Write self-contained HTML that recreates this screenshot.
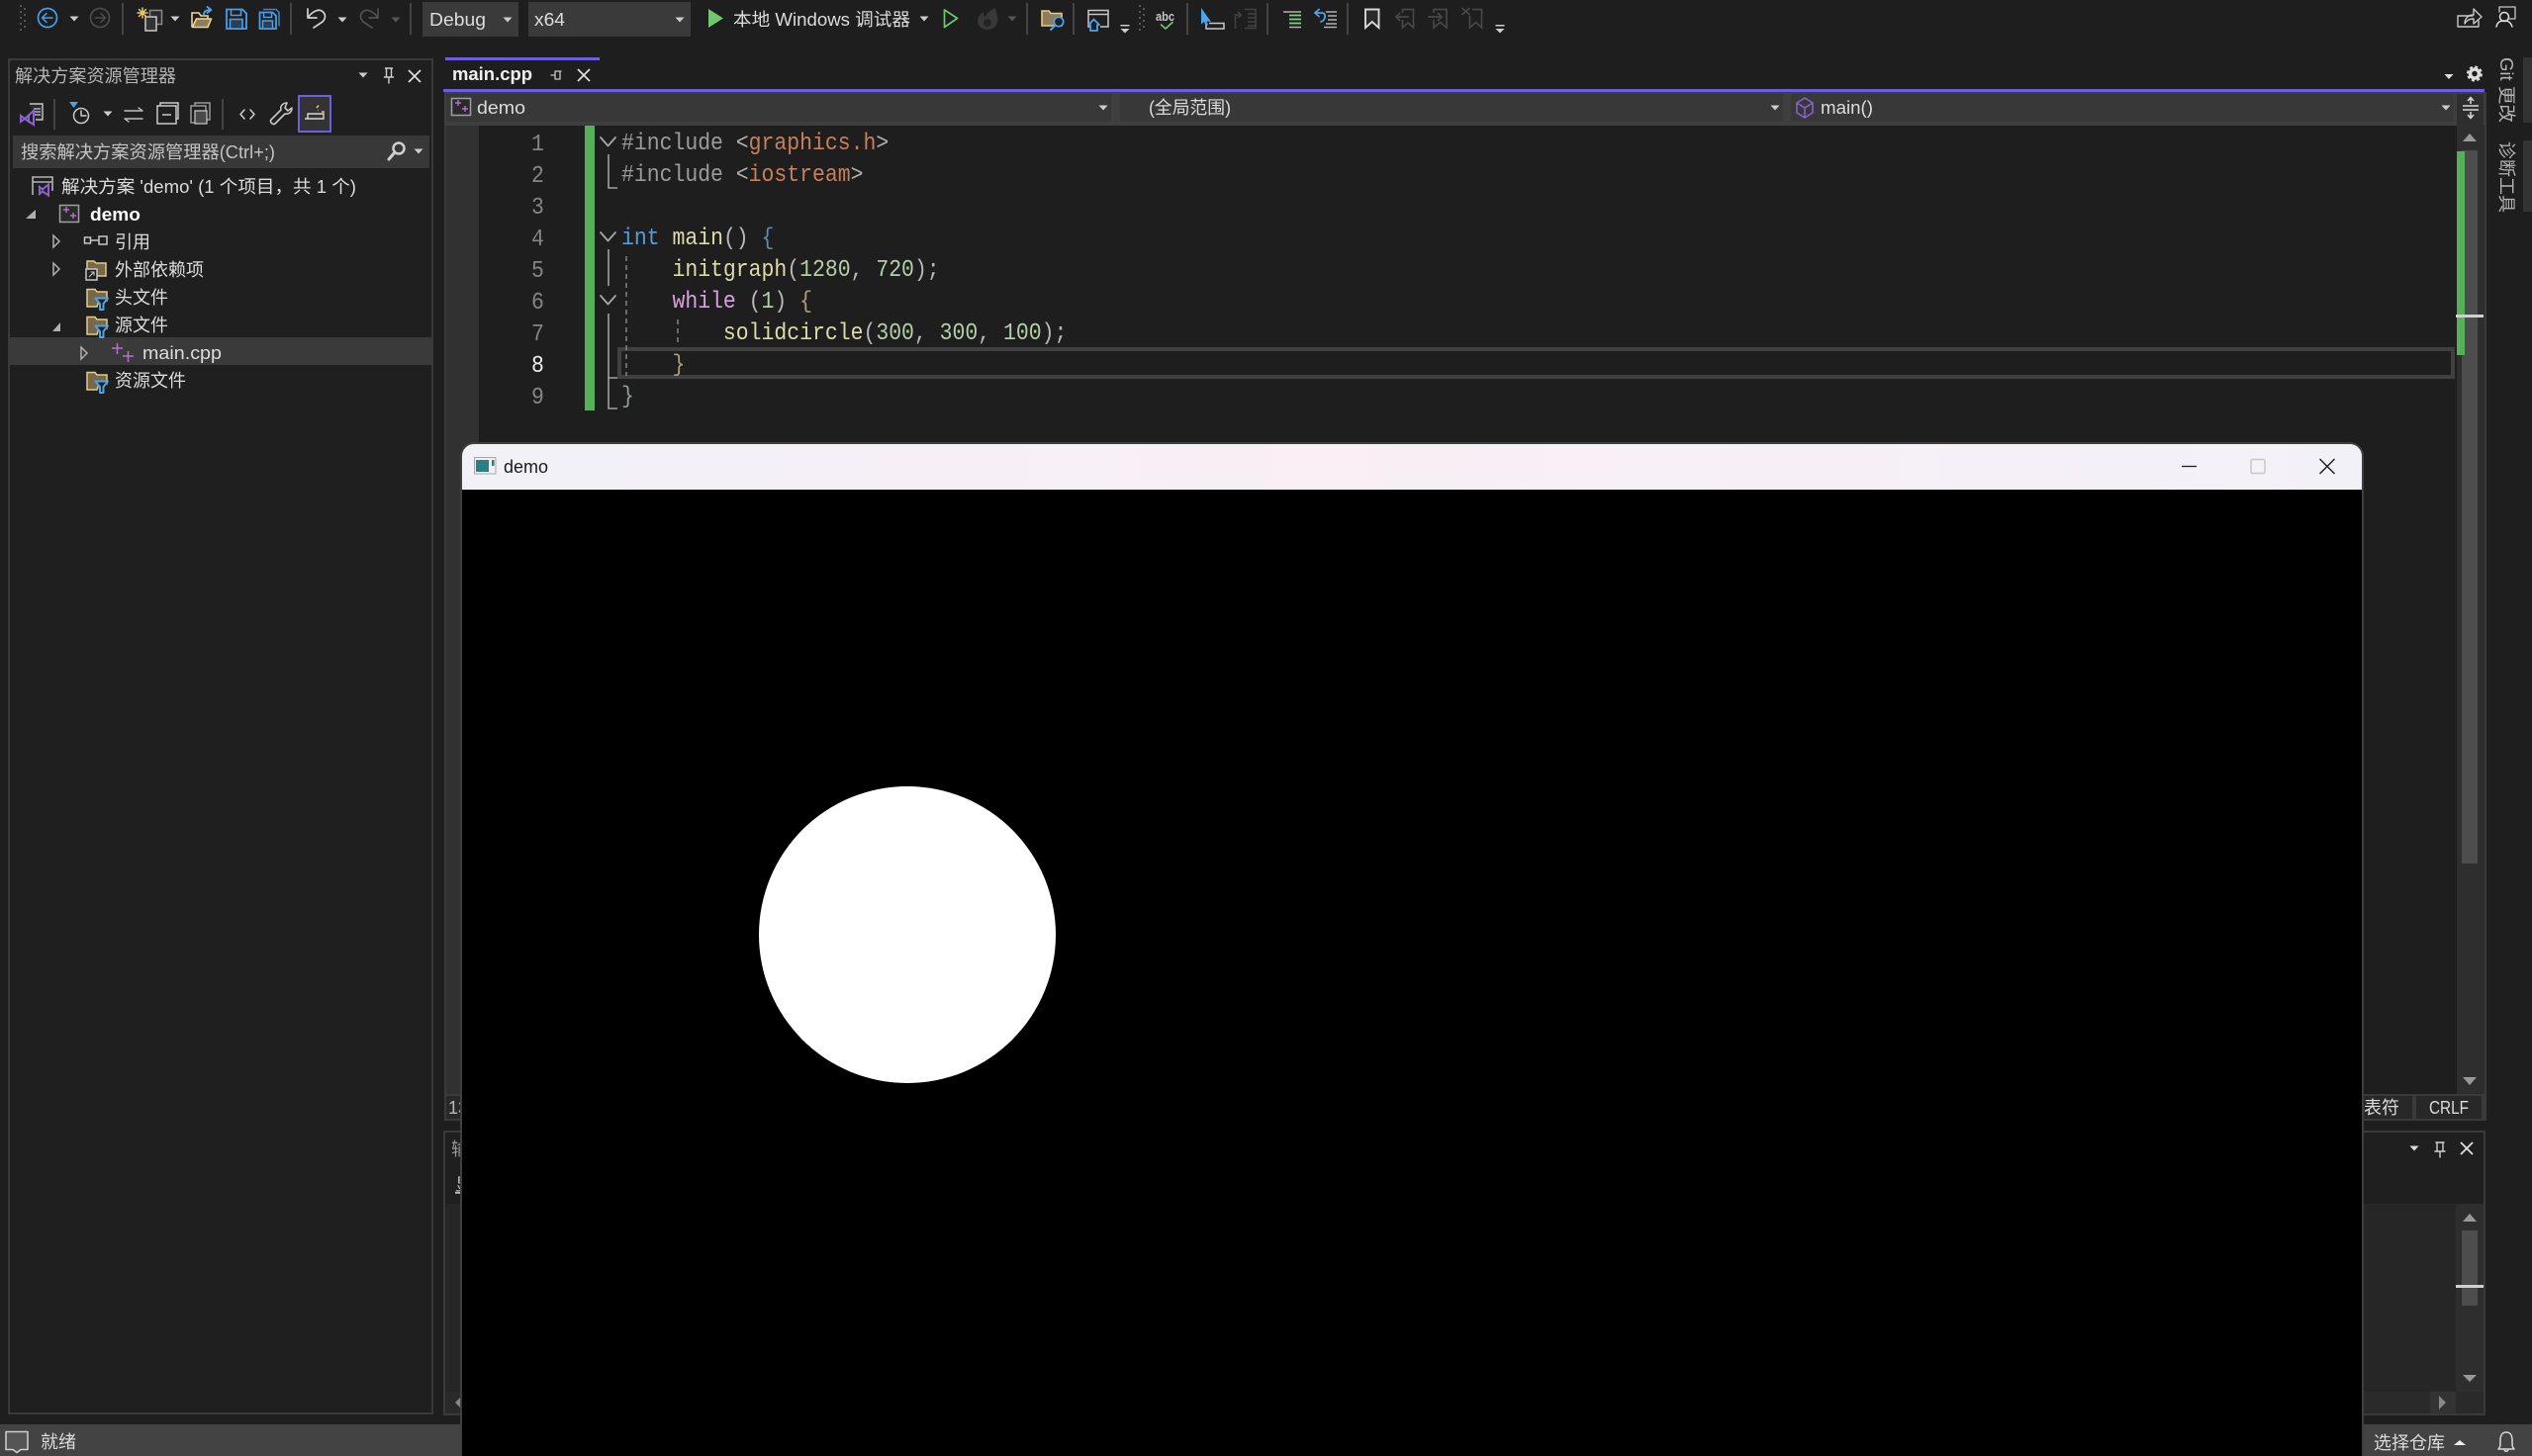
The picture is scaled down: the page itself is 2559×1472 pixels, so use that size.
<!DOCTYPE html>
<html lang="zh-CN">
<head>
<meta charset="utf-8">
<title>demo - Visual Studio</title>
<style>
html,body{margin:0;padding:0;background:#1e1e1e;overflow:hidden;width:2559px;height:1472px}
svg{display:block;position:absolute;left:0;top:0}
text{font-family:"Liberation Sans","Noto Sans CJK SC",sans-serif;font-size:18px;fill:#dcdcdc;white-space:pre}
.code{font-family:"Liberation Mono","Noto Sans CJK SC",monospace;font-size:24px}
.s{stroke-linecap:round;stroke-linejoin:round;fill:none}
</style>
</head>
<body>
<svg width="2559" height="1472" viewBox="0 0 2559 1472" xmlns="http://www.w3.org/2000/svg">
<defs>
<path id="dd" d="M-4.500 -2.500h9l-4.500 5z"/>
<g id="sd"><rect x="-4.500" y="0" width="9" height="1.500" fill="#ccc"/><path d="M-4.500 4h9l-4.500 4.500z" fill="#ccc"/></g>
<g id="grip" fill="#555"><rect x="0" y="0" width="2" height="2"/><rect x="4" y="3" width="2" height="2"/><rect x="0" y="6" width="2" height="2"/><rect x="4" y="9" width="2" height="2"/><rect x="0" y="12" width="2" height="2"/><rect x="4" y="15" width="2" height="2"/><rect x="0" y="18" width="2" height="2"/><rect x="4" y="21" width="2" height="2"/><rect x="0" y="24" width="2" height="2"/></g>
<g id="ff"><path d="M1 19V1.500h8l2 2.500h10v9H13l-2 6z" fill="#77684a" stroke="#e3cb8d" stroke-width="1.500"/><path d="M9.500 10.500h12.500l-4.500 5.500v6h-3.500v-6z" fill="#1f1f1f" stroke="#4da3e8" stroke-width="2" stroke-linejoin="round"/></g>
<linearGradient id="tb" x1="0" x2="1" y1="0" y2="0"><stop offset="0" stop-color="#f2f1f8"/><stop offset=".45" stop-color="#f9eff5"/><stop offset="1" stop-color="#f3f1f8"/></linearGradient>
</defs>

<rect width="2559" height="1472" fill="#1e1e1e"/>

<!-- top toolbar -->
<use href="#grip" x="20" y="5"/>
<circle cx="48" cy="18" r="9.500" fill="none" stroke="#4a9de8" stroke-width="1.700"/>
<path class="s" d="M53 18H43M47 13.500L42.500 18L47 22.500" stroke="#4a9de8" stroke-width="1.500"/>
<use href="#dd" x="75" y="19" fill="#ccc"/>
<circle cx="101" cy="18" r="9.500" fill="none" stroke="#4b4b4b" stroke-width="1.700"/>
<path class="s" d="M96 18H106M102 13.500L106.500 18L102 22.500" stroke="#4b4b4b" stroke-width="1.500"/>
<rect x="123" y="3" width="2" height="32" fill="#444"/>

<!-- new project -->
<rect x="151.500" y="10.500" width="12" height="14" fill="#2b2b2b" stroke="#8a8a8a" stroke-width="1.500"/>
<rect x="147" y="17" width="11" height="14" fill="#333" stroke="#c8c8c8" stroke-width="1.500"/>
<path class="s" d="M144 8v10M139 13h10M140.500 9.500l7 7M147.500 9.500l-7 7" stroke="#e8c66a" stroke-width="1.500"/>
<use href="#dd" x="177" y="19" fill="#ccc"/>
<!-- open -->
<path d="M194 27.500V13h7l2 3h7v3" fill="none" stroke="#f0d696" stroke-width="1.600"/>
<path d="M194.500 27.500l4-8.500h15l-3.500 8.500z" fill="#8d7d5a" stroke="#f0d696" stroke-width="1.600" stroke-linejoin="round"/>
<path class="s" d="M206 15c0-3 2-5 7-5M209.500 7l4 3-4 3" stroke="#4da3e8" stroke-width="1.800"/>
<!-- save -->
<path d="M229 9.500h16l4 4v15.500h-20z" fill="#1f1f1f" stroke="#4a9de8" stroke-width="1.800"/>
<path d="M233.500 9.500v6h10v-6" fill="none" stroke="#4a9de8" stroke-width="1.600"/>
<rect x="232.500" y="19.500" width="12.500" height="9.500" fill="#2b3f52" stroke="#4a9de8" stroke-width="1.600"/>
<path d="M266 9.500h13l3 3v14" fill="none" stroke="#3f85c4" stroke-width="1.500"/>
<path d="M262.500 12.500h13l3.500 3.500v13h-16.500z" fill="#1f1f1f" stroke="#4a9de8" stroke-width="1.800"/>
<path d="M266.500 12.500v5h8v-5" fill="none" stroke="#4a9de8" stroke-width="1.500"/>
<rect x="265.500" y="21" width="10" height="8" fill="#2b3f52" stroke="#4a9de8" stroke-width="1.500"/>
<rect x="293" y="3" width="2" height="32" fill="#444"/>
<!-- undo / redo -->
<path class="s" d="M311 9V18H320M311 18C316 11 322 9 325 11C330 14 329 19 326 22L317 28" stroke="#d0d0d0" stroke-width="1.700"/>
<use href="#dd" x="346" y="20" fill="#ccc"/>
<path class="s" d="M382 9V18H373M382 18C377 11 371 9 368 11C363 14 364 19 367 22L376 28" stroke="#505050" stroke-width="1.700"/>
<use href="#dd" x="400" y="20" fill="#555"/>
<rect x="414" y="3" width="2" height="32" fill="#444"/>
<rect x="427" y="2" width="97" height="35" fill="#3a3a3a"/>
<text x="434" y="26" textLength="57" lengthAdjust="spacingAndGlyphs">Debug</text>
<use href="#dd" x="513" y="20" fill="#ccc"/>
<rect x="534" y="2" width="164" height="35" fill="#3a3a3a"/>
<text x="540" y="26" textLength="31" lengthAdjust="spacingAndGlyphs">x64</text>
<use href="#dd" x="687" y="20" fill="#ccc"/>
<path d="M716 9L731 18.500L716 28z" fill="#70c770"/>
<text x="741" y="26" textLength="179" lengthAdjust="spacingAndGlyphs">本地 Windows 调试器</text>
<use href="#dd" x="934" y="19" fill="#ccc"/>
<path d="M954.500 10L967.500 18.500L954.500 27.500z" fill="none" stroke="#70c770" stroke-width="1.700" stroke-linejoin="round"/>
<path d="M1006 8C1007 14 1009 18 1008 22C1007 28 1002 30 998 30C992 30 988 26 988 21C988 17 991 14 994 12C994 15 994 16 996 17C997 13 1001 10 1006 8z" fill="#383838"/>
<circle cx="998" cy="23" r="4" fill="#242424"/>
<use href="#dd" x="1023" y="19" fill="#555"/>
<rect x="1037" y="3" width="2" height="32" fill="#444"/>
<!-- folder search -->
<path d="M1053 26V11h7l2 2.500h11V26z" fill="#8d7d5a" stroke="#e7c98a" stroke-width="1.600"/>
<circle cx="1070" cy="22" r="4.700" fill="#1f1f1f" stroke="#4da3e8" stroke-width="1.700"/>
<path class="s" d="M1066.500 25.500l-4.500 4.500" stroke="#4da3e8" stroke-width="2"/>
<rect x="1084" y="3" width="2" height="32" fill="#444"/>
<!-- window home -->
<path d="M1104 27H1100V10.500H1120V27H1112M1100 14.500H1120" fill="none" stroke="#c8c8c8" stroke-width="1.500"/>
<path d="M1100.500 25l5-5.500 5.500 5.500h-2v6h-7v-6z" fill="#1f1f1f" stroke="#4da3e8" stroke-width="1.800" stroke-linejoin="round"/>
<use href="#sd" x="1137" y="25"/>
<use href="#grip" x="1151" y="5"/>
<text x="1168" y="21" textLength="19" lengthAdjust="spacingAndGlyphs" style="font-size:13px;font-weight:bold;fill:#c8c8c8">abc</text>
<path class="s" d="M1173.500 25l4.500 4 7-6.500" stroke="#70c770" stroke-width="1.600"/>
<rect x="1199" y="3" width="2" height="32" fill="#444"/>
<!-- cursor -->
<path d="M1214 8l10 14-4.500-.5 1.500 3.500-2.500 1-1.500-4-3 2.500z" fill="#4da3e8"/>
<path d="M1222 23.500h15v5.500h-18v-4" fill="none" stroke="#c8c8c8" stroke-width="1.500"/>
<path d="M1248.500 29V15h6M1251 12l3.500 3-3.500 3M1258 9.500h11v19h-11M1261 14h8M1261 18h8M1261 22h8M1261 26h8" fill="none" stroke="#424242" stroke-width="1.500"/>
<rect x="1280" y="3" width="2" height="32" fill="#444"/>
<!-- comment -->
<path d="M1297 12h6M1303 12h12M1303 27.500h12" stroke="#b0b0b0" stroke-width="1.500"/>
<path d="M1303 15.500h12M1303 19.500h12M1303 23.500h12" stroke="#7fd07f" stroke-width="1.700"/>
<!-- uncomment -->
<path class="s" d="M1333 9.500l-4 3.500 4 3.500M1329 13h7c4 0 4 5 1 8l-2 1" stroke="#4da3e8" stroke-width="1.800"/>
<path d="M1340 12h11M1342 16h9M1342 20h9M1340 24h11M1338 27.500h13" stroke="#b0b0b0" stroke-width="1.500"/>
<rect x="1361" y="3" width="2" height="32" fill="#444"/>
<!-- bookmarks -->
<path d="M1380 9.500h13.500v18.500l-6.750-6-6.750 6z" fill="#2a2a2a" stroke="#d8d8d8" stroke-width="1.900"/>
<path d="M1417.500 13V9.500h11v18.500l-5.500-5-5.500 5V20M1411 17h13M1415 13l-4 4 4 4" fill="none" stroke="#474747" stroke-width="1.700"/>
<path d="M1449 13V9.500h13v18.500l-6.500-5.500-6.500 5.500V20M1443 17h13M1453 13l4 4-4 4" fill="none" stroke="#474747" stroke-width="1.700"/>
<path d="M1488 9.500h9.500v18.500l-6-5.500-6 5.500V16M1477.500 8l8 7M1485.500 8l-8 7" fill="none" stroke="#474747" stroke-width="1.700"/>
<use href="#sd" x="1516" y="25"/>

<!-- top-right icons -->
<path class="s" d="M2499 16H2484V27H2505V21" stroke="#c8c8c8" stroke-width="1.400"/>
<path d="M2491 24c0-6 4-9 9-9V9l8 8-8 7v-5c-4 0-7 1-9 5z" fill="none" stroke="#c8c8c8" stroke-width="1.400" stroke-linejoin="round"/>
<path class="s" d="M2526 12V7h16v12h-6" stroke="#c8c8c8" stroke-width="1.300"/>
<circle cx="2531" cy="17" r="4.500" fill="none" stroke="#e0e0e0" stroke-width="1.500"/>
<path class="s" d="M2523 27c1-5 4-6 8-6s6 1 8 6" stroke="#e0e0e0" stroke-width="1.500"/>

<!-- solution explorer frame -->
<rect x="9" y="60" width="428" height="1369" fill="#1f1f1f" stroke="#3a3a3a" stroke-width="2"/>
<text x="15" y="83" style="fill:#b4b4b4" textLength="163" lengthAdjust="spacingAndGlyphs">解决方案资源管理器</text>
<use href="#dd" x="367" y="76" fill="#ccc"/>
<path class="s" d="M389.500 69h7M390.500 69v9h5V69M388.500 78h9M393 78v6" stroke="#d0d0d0" stroke-width="1.400"/>
<path d="M413 71l12 12M425 71l-12 12" stroke="#e0e0e0" stroke-width="1.700"/>

<!-- SE toolbar -->
<path d="M30 105h13v16H36" fill="#2a2a2a" stroke="#c8c8c8" stroke-width="1.400"/>
<path d="M34 110h7M34 113h7M34 116h7" stroke="#c8c8c8" stroke-width="1.200"/>
<path d="M21 117l4 3 9-8v14l-9-6-4 3z M25 120l4 3v-6z" fill="none" stroke="#8a63d2" stroke-width="2"/>
<rect x="54" y="100" width="2" height="31" fill="#444"/>
<path d="M70 103h9l-4.500 6z" fill="#4da3e8"/>
<circle cx="82" cy="117" r="7.500" fill="none" stroke="#c8c8c8" stroke-width="1.500"/>
<path class="s" d="M82 112v5h5" stroke="#c8c8c8" stroke-width="1.500"/>
<use href="#dd" x="109" y="115" fill="#ccc"/>
<path class="s" d="M126 112h18l-4-3M144 120h-18l4 3" stroke="#c0c0c0" stroke-width="1.400"/>
<rect x="159" y="107" width="19" height="18" fill="#1f1f1f" stroke="#c8c8c8" stroke-width="1.500"/>
<path d="M162 107v-3h18v16h-2M164 116h9" fill="none" stroke="#c8c8c8" stroke-width="1.500"/>
<path d="M197 107v-3h15v17h-4M193 107h15v17h-15z" fill="none" stroke="#9a9a9a" stroke-width="1.500"/>
<path d="M197 112h12v13h-12z" fill="#4a4a4a" stroke="#c8c8c8" stroke-width="1.200"/>
<rect x="224" y="100" width="2" height="31" fill="#444"/>
<path class="s" d="M247 111l-4 4.500 4 4.500M253 111l4 4.500-4 4.500" stroke="#d0d0d0" stroke-width="1.500"/>
<path d="M290 104c-4 0-7 3-6 7l-10 10c-2 2 2 6 4 4l10-10c4 1 7-2 7-6l-4 3-3-3z" fill="none" stroke="#c8c8c8" stroke-width="1.600" stroke-linejoin="round"/>
<rect x="302" y="97" width="32" height="36" fill="#333" stroke="#6b5fe0" stroke-width="2"/>
<path d="M308 120h19v-5h-16v5" fill="none" stroke="#d8d8d8" stroke-width="1.400"/>
<path d="M320 109l2-2.500M325 113h3M322 111.500l-.5 0" stroke="#e8c66a" stroke-width="1.500"/>

<!-- SE search -->
<rect x="13" y="137" width="421" height="33" fill="#383838"/>
<text x="21" y="160" style="fill:#c4c4c4" textLength="257" lengthAdjust="spacingAndGlyphs">搜索解决方案资源管理器(Ctrl+;)</text>
<circle cx="403" cy="150" r="5.500" fill="none" stroke="#d0d0d0" stroke-width="2.500"/>
<path class="s" d="M399 154l-6 7" stroke="#d0d0d0" stroke-width="3"/>
<use href="#dd" x="423" y="153" fill="#ccc"/>

<!-- SE tree -->
<rect x="10" y="341" width="427" height="28" fill="#3a3a3a"/>
<path d="M33 197V179h20v14M33 184h20" fill="none" stroke="#b4b4b4" stroke-width="1.600"/>
<path d="M40 189l3 2.500 6-5v11l-6-4-3 2.500z" fill="none" stroke="#8a63d2" stroke-width="2"/>
<text x="62" y="195" textLength="298" lengthAdjust="spacingAndGlyphs">解决方案 'demo' (1 个项目，共 1 个)</text>

<path d="M36 212v9H26z" fill="#b0b0b0"/>
<rect x="60.500" y="207.500" width="19" height="17" fill="#2a2a2a" stroke="#a0a0a0" stroke-width="1.500"/>
<path d="M64 212h6M67 209v6M71 218h6M74 215v6" stroke="#b76fd0" stroke-width="1.400"/>
<text x="91" y="223" style="font-weight:bold;fill:#fff" textLength="51" lengthAdjust="spacingAndGlyphs">demo</text>

<path d="M54 238l6 6-6 6z" fill="none" stroke="#b0b0b0" stroke-width="1.500"/>
<rect x="85.500" y="240" width="6" height="6" fill="none" stroke="#c8c8c8" stroke-width="1.500"/>
<rect x="100" y="239" width="8" height="8" fill="none" stroke="#c8c8c8" stroke-width="1.500"/>
<path d="M91 243h9" stroke="#c8c8c8" stroke-width="1.500"/>
<text x="116" y="251">引用</text>

<path d="M54 266l6 6-6 6z" fill="none" stroke="#b0b0b0" stroke-width="1.500"/>
<path d="M88 278V264h7l2 2h10v13H97" fill="#77684a" stroke="#e3cb8d" stroke-width="1.500"/>
<rect x="87" y="272" width="11" height="11" fill="#1f1f1f" stroke="#c8c8c8" stroke-width="1.500"/>
<path d="M90 280l5-5M91.500 275H95v3.500" fill="none" stroke="#c8c8c8" stroke-width="1.100"/>
<text x="116" y="279">外部依赖项</text>

<use href="#ff" x="87" y="291"/>
<text x="116" y="307">头文件</text>

<path d="M61 326v9H53z" fill="#b0b0b0"/>
<use href="#ff" x="87" y="319"/>
<text x="116" y="335">源文件</text>

<path d="M82 351l6 6-6 6z" fill="none" stroke="#b0b0b0" stroke-width="1.500"/>
<path d="M113 352h11M118.500 347v11M124 360h11M129.500 355v11" stroke="#b76fd0" stroke-width="1.500"/>
<text x="144" y="363" textLength="80" lengthAdjust="spacingAndGlyphs">main.cpp</text>

<use href="#ff" x="87" y="375"/>
<text x="116" y="391">资源文件</text>

<!-- doc tab -->
<rect x="450" y="58" width="156" height="3" fill="#6b5fe0"/>
<text x="457" y="81" style="font-weight:bold;fill:#f0f0f0" textLength="81" lengthAdjust="spacingAndGlyphs">main.cpp</text>
<path class="s" d="M557 76h4M561 72v8h5v-8zM566 72h1" stroke="#c8c8c8" stroke-width="1.300"/>
<path d="M584 70l12 12M596 70l-12 12" stroke="#e0e0e0" stroke-width="1.700"/>
<use href="#dd" x="2475" y="77.500" fill="#ddd"/>
<circle cx="2501" cy="74.500" r="4.500" fill="none" stroke="#dcdcdc" stroke-width="3.500"/>
<circle cx="2501" cy="74.500" r="7" fill="none" stroke="#dcdcdc" stroke-width="2" stroke-dasharray="3 2.500"/>
<rect x="448" y="90" width="2063" height="3" fill="#6b5fe0"/>

<!-- nav bar -->
<rect x="449" y="93" width="2063" height="34" fill="#3f3f3f"/>
<rect x="451" y="95" width="672" height="28" fill="#383838"/>
<rect x="1132" y="95" width="670" height="28" fill="#383838"/>
<rect x="1810" y="95" width="670" height="28" fill="#383838"/>
<rect x="2483" y="95" width="27" height="32" fill="#2e2e2e"/>
<rect x="456.500" y="99.500" width="19" height="17" fill="#2a2a2a" stroke="#a0a0a0" stroke-width="1.500"/>
<path d="M460 104h6M463 101v6M467 110h6M470 107v6" stroke="#b76fd0" stroke-width="1.400"/>
<text x="482" y="115" textLength="49" lengthAdjust="spacingAndGlyphs">demo</text>
<use href="#dd" x="1115" y="109" fill="#ccc"/>
<text x="1161" y="115" textLength="83" lengthAdjust="spacingAndGlyphs">(全局范围)</text>
<use href="#dd" x="1794" y="109" fill="#ccc"/>
<path d="M1824 99l8 5v10l-8 5-8-5v-10zM1816 104l8 5 8-5M1824 109v10" fill="none" stroke="#8a63d2" stroke-width="1.500" stroke-linejoin="round"/>
<text x="1840" y="115" textLength="53" lengthAdjust="spacingAndGlyphs">main()</text>
<use href="#dd" x="2472" y="109" fill="#ccc"/>
<path d="M2489 107h16M2489 111h16M2497 99v6M2497 113v6M2494 102l3-3.500 3 3.500M2494 116l3 3.500 3-3.500" fill="none" stroke="#d8d8d8" stroke-width="1.500"/>

<!-- editor -->
<rect x="449" y="127" width="2" height="1006" fill="#3a3a3a"/>
<rect x="451" y="127" width="33" height="980" fill="#313131"/>
<rect x="484" y="127" width="1999" height="980" fill="#1e1e1e"/>
<rect x="591" y="127" width="10" height="288" fill="#56b05a"/>

<text class="code" transform="translate(537,152) scale(.894,1)" style="fill:#858585">1</text>
<text class="code" transform="translate(537,184) scale(.894,1)" style="fill:#858585">2</text>
<text class="code" transform="translate(537,216) scale(.894,1)" style="fill:#858585">3</text>
<text class="code" transform="translate(537,248) scale(.894,1)" style="fill:#858585">4</text>
<text class="code" transform="translate(537,280) scale(.894,1)" style="fill:#858585">5</text>
<text class="code" transform="translate(537,312) scale(.894,1)" style="fill:#858585">6</text>
<text class="code" transform="translate(537,344) scale(.894,1)" style="fill:#858585">7</text>
<text class="code" transform="translate(537,376) scale(.894,1)" style="fill:#eeeeee">8</text>
<text class="code" transform="translate(537,408) scale(.894,1)" style="fill:#858585">9</text>

<!-- current line -->
<rect x="626" y="353" width="1853" height="28" fill="none" stroke="#404040" stroke-width="4"/>

<!-- outlining -->
<path class="s" d="M607 139l7.500 8.500 7.500-8.500M607 235l7.500 8.500 7.500-8.500M607 299l7.500 8.500 7.500-8.500" stroke="#a8a8a8" stroke-width="1.800"/>
<path d="M615 156V190H624M615 252V289M615 317V382H624M615 382V413H624" fill="none" stroke="#a0a0a0" stroke-width="1.600"/>
<path d="M633 259V380M685 323V350" stroke="#8a8a8a" stroke-width="1.400" stroke-dasharray="5 4"/>

<text class="code" transform="translate(628,151) scale(.8937,1)"><tspan style="fill:#9b9b9b">#include </tspan><tspan style="fill:#b0b0b0">&lt;</tspan><tspan style="fill:#c8805a">graphics.h</tspan><tspan style="fill:#b0b0b0">&gt;</tspan></text>
<text class="code" transform="translate(628,183) scale(.8937,1)"><tspan style="fill:#9b9b9b">#include </tspan><tspan style="fill:#b0b0b0">&lt;</tspan><tspan style="fill:#c8805a">iostream</tspan><tspan style="fill:#b0b0b0">&gt;</tspan></text>
<text class="code" transform="translate(628,247) scale(.8937,1)"><tspan style="fill:#569cd6">int</tspan> <tspan style="fill:#dcdcaa">main</tspan><tspan style="fill:#b8b8b8">() </tspan><tspan style="fill:#5f89ad">{</tspan></text>
<text class="code" transform="translate(628,279) scale(.8937,1)">    <tspan style="fill:#dcdcaa">initgraph</tspan><tspan style="fill:#b8b8b8">(</tspan><tspan style="fill:#b5cea8">1280</tspan><tspan style="fill:#b8b8b8">, </tspan><tspan style="fill:#b5cea8">720</tspan><tspan style="fill:#b8b8b8">);</tspan></text>
<text class="code" transform="translate(628,311) scale(.8937,1)">    <tspan style="fill:#d8a0df">while</tspan><tspan style="fill:#b8b8b8"> (</tspan><tspan style="fill:#b5cea8">1</tspan><tspan style="fill:#b8b8b8">) </tspan><tspan style="fill:#a89f78">{</tspan></text>
<text class="code" transform="translate(628,343) scale(.8937,1)">        <tspan style="fill:#dcdcaa">solidcircle</tspan><tspan style="fill:#b8b8b8">(</tspan><tspan style="fill:#b5cea8">300</tspan><tspan style="fill:#b8b8b8">, </tspan><tspan style="fill:#b5cea8">300</tspan><tspan style="fill:#b8b8b8">, </tspan><tspan style="fill:#b5cea8">100</tspan><tspan style="fill:#b8b8b8">);</tspan></text>
<text class="code" transform="translate(628,375) scale(.8937,1)">    <tspan style="fill:#a89f78">}</tspan></text>
<text class="code" transform="translate(628,407) scale(.8937,1)"><tspan style="fill:#8f9a9a">}</tspan></text>

<!-- editor scrollbar -->
<rect x="2483" y="127" width="28" height="980" fill="#2e2e2e"/>
<rect x="2511" y="93" width="2" height="1040" fill="#3a3a3a"/>
<path d="M2489 143l7-8 7 8z" fill="#999"/>
<rect x="2488" y="152" width="16" height="721" fill="#4d4d4d"/>
<rect x="2483" y="153" width="8" height="206" fill="#56b05a"/>
<rect x="2482" y="318" width="28" height="3" fill="#d0d0d0"/>
<path d="M2489 1089l7 8 7-8z" fill="#999"/>

<!-- editor status row -->
<rect x="449" y="1106" width="2063" height="27" fill="#3a3a3a"/>
<rect x="451" y="1108" width="1987" height="23" fill="#282828"/>
<rect x="2442" y="1108" width="66" height="23" fill="#282828"/>
<text x="453" y="1126" style="fill:#b8b8b8">13</text>
<text x="2371" y="1126">制表符</text>
<text x="2455" y="1126" textLength="40" lengthAdjust="spacingAndGlyphs">CRLF</text>

<!-- output panel -->
<rect x="449" y="1144" width="2062" height="286" fill="#1f1f1f" stroke="#3a3a3a" stroke-width="2"/>
<rect x="450" y="1217" width="2032" height="190" fill="#262626"/>
<rect x="2482" y="1217" width="28" height="190" fill="#2e2e2e"/>
<rect x="450" y="1407" width="2060" height="22" fill="#2a2a2a"/>
<rect x="2456" y="1407" width="26" height="22" fill="#333"/>
<text x="456" y="1168" style="fill:#999">输出</text>
<text x="460" y="1204" style="fill:#bbb;text-decoration:underline">显示</text>
<use href="#dd" x="2440" y="1161" fill="#ddd"/>
<path class="s" d="M2462 1155h8M2463 1155v9h6v-9M2461 1164h10M2466 1164v6" stroke="#d0d0d0" stroke-width="1.400"/>
<path d="M2487 1155l12 12M2499 1155l-12 12" stroke="#e0e0e0" stroke-width="1.800"/>
<path d="M2489 1235l7-8 7 8z" fill="#999"/>
<rect x="2488" y="1244" width="16" height="76" fill="#4d4d4d"/>
<rect x="2482" y="1299" width="28" height="3" fill="#d0d0d0"/>
<path d="M2489 1390l7 7 7-7z" fill="#999"/>
<path d="M2465 1411l7 7-7 7z" fill="#888"/>
<path d="M467 1411l-7 7 7 7z" fill="#888"/>

<!-- status bar -->
<rect x="0" y="1440" width="2559" height="32" fill="#434343"/>
<path d="M6 1447.500h22v18h-7l-4 3-4-3H6z" fill="#555" stroke="#d0d0d0" stroke-width="1.500" stroke-linejoin="round"/>
<text x="41" y="1464">就绪</text>
<text x="2399" y="1465">选择仓库</text>
<path d="M2480 1461l6-5 6 5z" fill="#eee"/>
<path d="M2525 1465c2-2 2-3 2-9 0-6 3-8 6-8s6 2 6 8c0 6 0 7 2 9zM2531 1465c0 3 4 3 4 0" fill="none" stroke="#d8d8d8" stroke-width="1.500" stroke-linejoin="round"/>

<!-- right tool tabs -->
<rect x="2550" y="58" width="9" height="66" fill="#333"/>
<rect x="2550" y="142" width="9" height="72" fill="#333"/>
<text transform="translate(2527,58) rotate(90)" style="fill:#b4b4b4" textLength="66" lengthAdjust="spacingAndGlyphs">Git 更改</text>
<text transform="translate(2527,143) rotate(90)" style="fill:#b4b4b4">诊断工具</text>

<!-- app window -->
<path d="M465 1472V461a14 14 0 0 1 14-14H2375a14 14 0 0 1 14 14V1472z" fill="#3f3f3f"/>
<path d="M467 495V461a12 12 0 0 1 12-12H2375a12 12 0 0 1 12 12V495z" fill="url(#tb)"/>
<rect x="467" y="495" width="1920" height="977" fill="#000"/>
<rect x="479.500" y="462.500" width="21.500" height="16.500" fill="#f0f0f0" stroke="#a8a8a8"/>
<rect x="481" y="465" width="13" height="12" fill="#2a7f86"/>
<rect x="497" y="465" width="2.500" height="6" fill="#2a7f86"/>
<text x="509" y="478" style="fill:#1a1a1a">demo</text>
<path d="M2205 471.500h15" stroke="#222" stroke-width="1.300"/>
<rect x="2275" y="464.500" width="14" height="14" rx="1.500" fill="none" stroke="#c8c8c8" stroke-width="1.500"/>
<path d="M2344.500 464l15 15M2359.500 464l-15 15" stroke="#1a1a1a" stroke-width="1.400"/>
<circle cx="917" cy="945" r="150" fill="#fff"/>
</svg>
</body>
</html>
